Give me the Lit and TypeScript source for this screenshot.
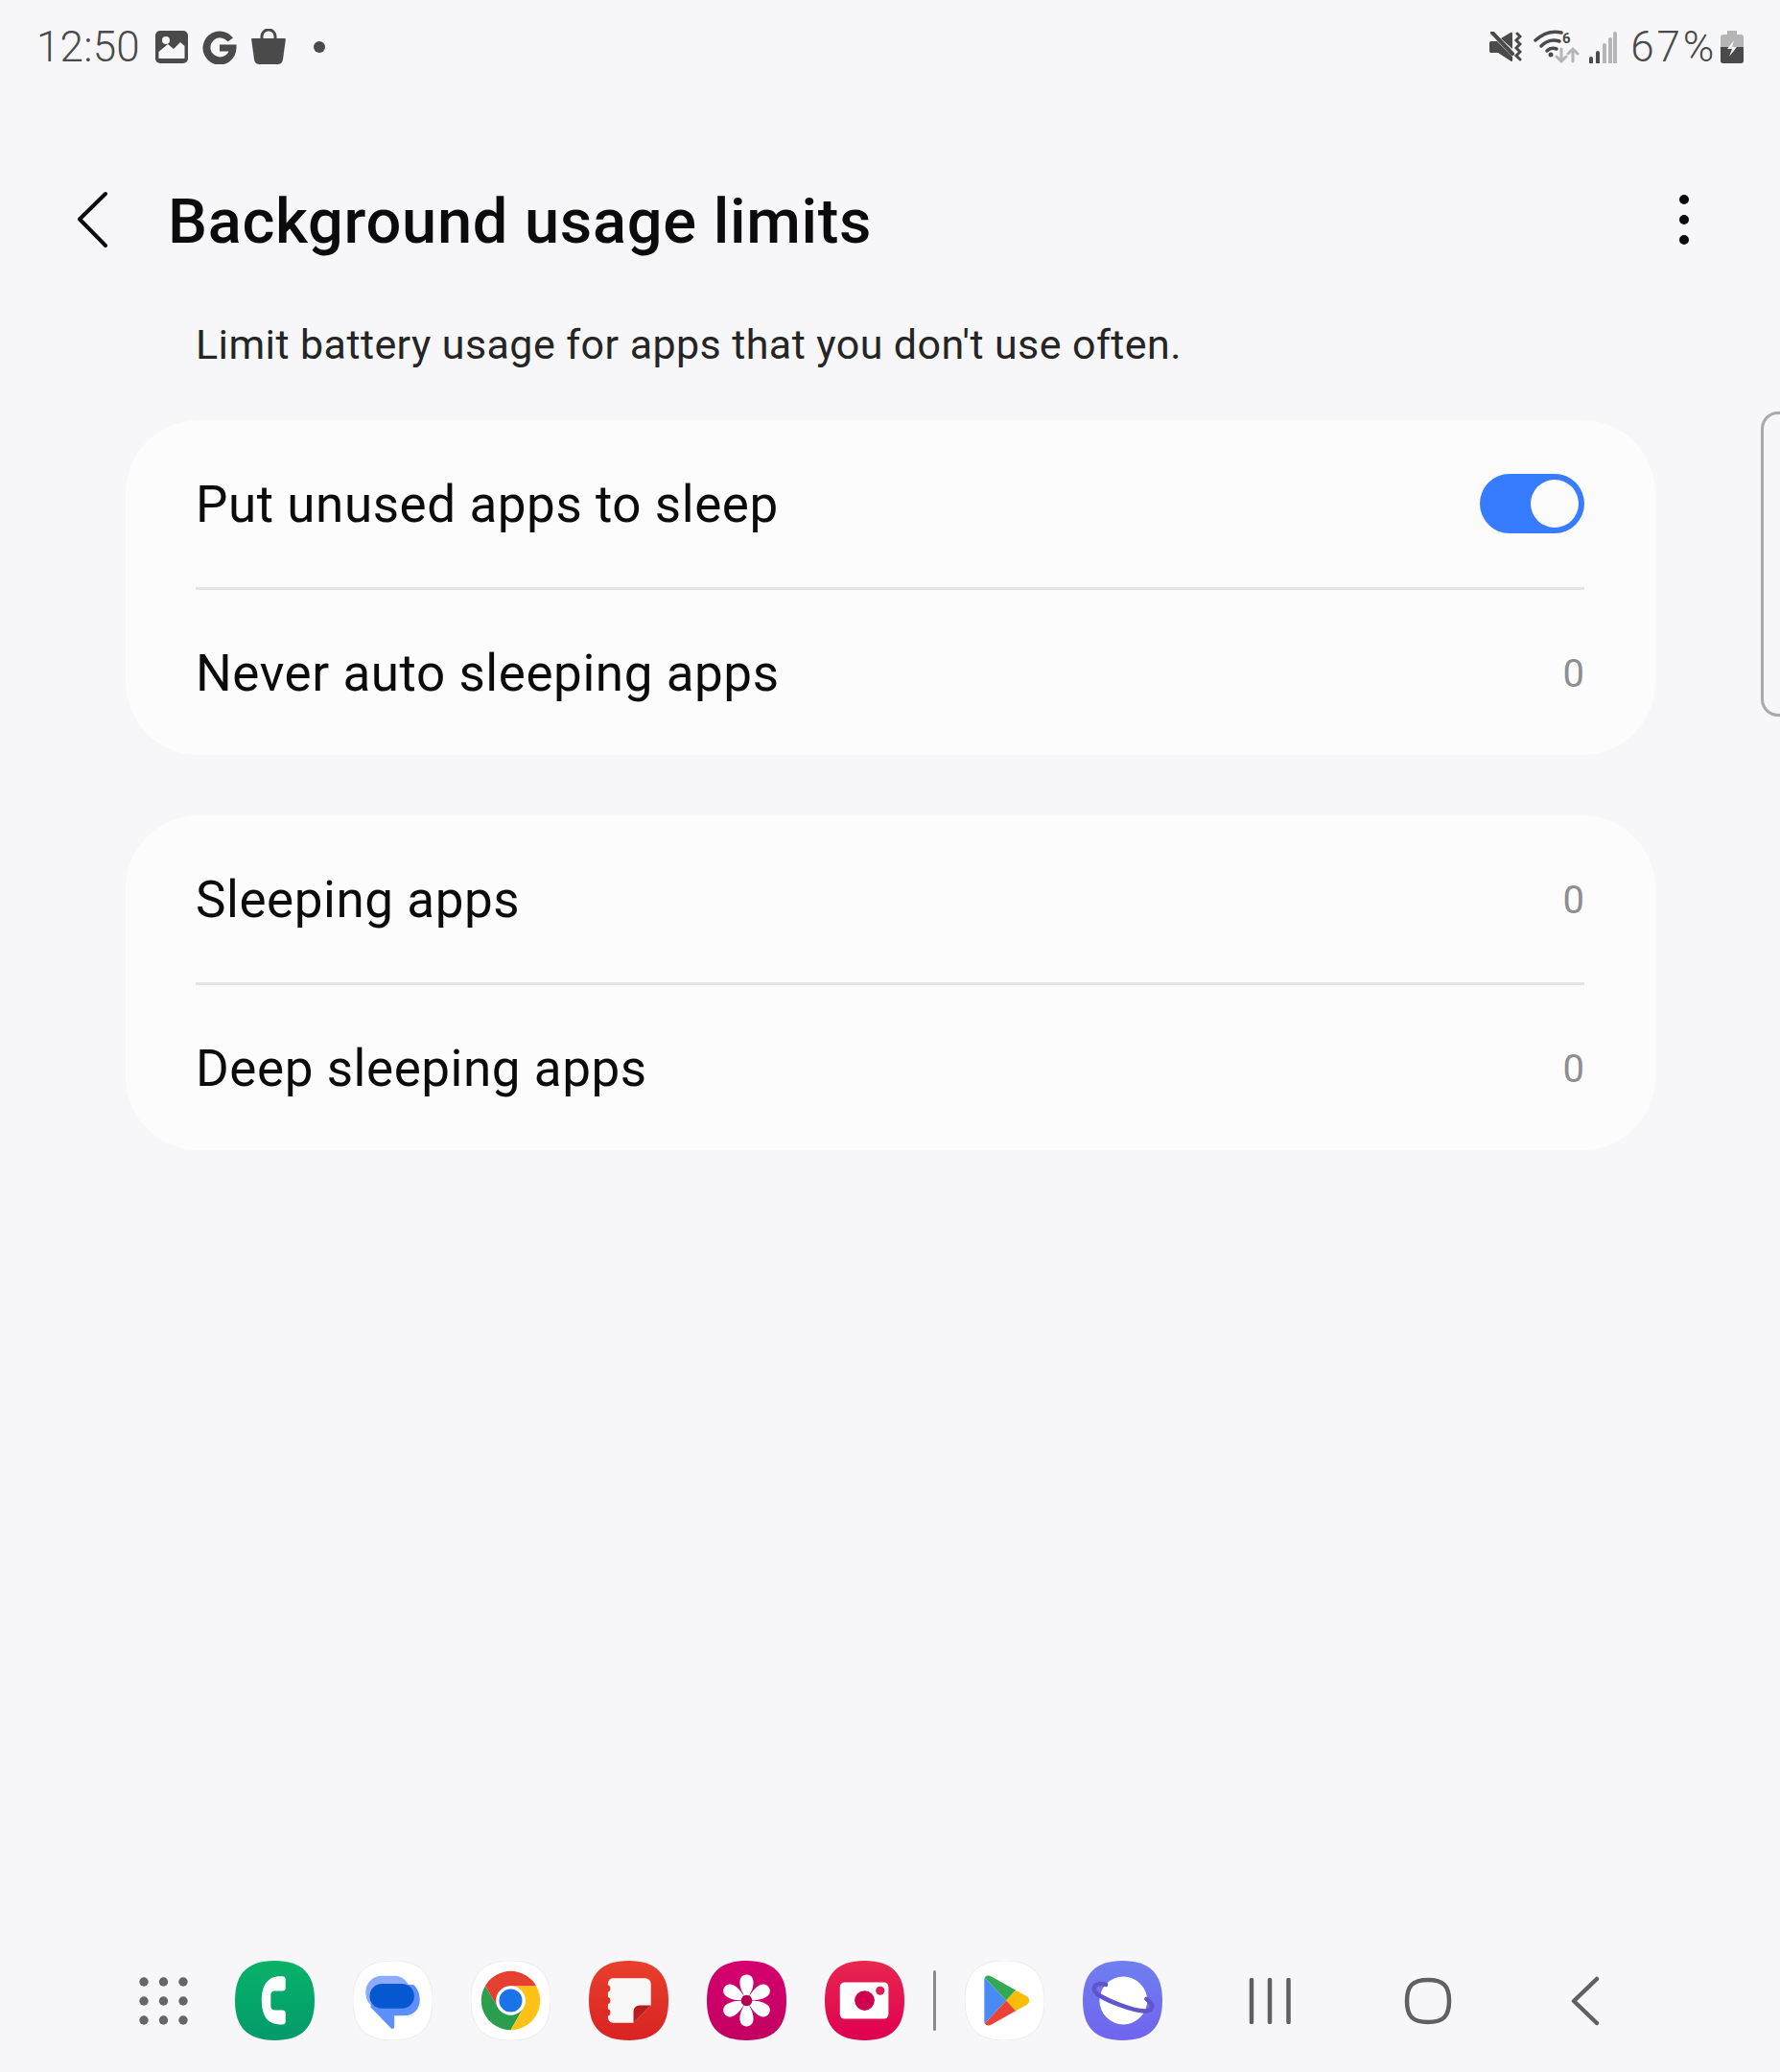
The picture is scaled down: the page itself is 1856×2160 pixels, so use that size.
import { LitElement, html, svg, css } from "lit";
import { customElement } from "lit/decorators.js";

const SQUIRCLE = "M50 0C84 0 100 16 100 50C100 84 84 100 50 100C16 100 0 84 0 50C0 16 16 0 50 0Z";

const appIcons = [
  html`<svg class="app" viewBox="0 0 100 100">
    <defs><linearGradient id="gPhone" x1="0" y1="0" x2="0" y2="1"><stop offset="0" stop-color="#09b268"/><stop offset="1" stop-color="#029a6b"/></linearGradient></defs>
    <path d=${SQUIRCLE} fill="url(#gPhone)"/>
    <path fill="#fff" d="M60 19.5C62 19.5 63.5 21 63.5 23V35C63.5 37 62 38 60 38H50C46.5 38 45 40 45 43V57C45 60 46.5 62 50 62H60C62 62 63.5 63.5 63.5 65V77C63.5 79 62 80 60 80H56C42 80 33.5 70 33.5 50C33.5 30 42 19.5 56 19.5Z"/>
  </svg>`,
  html`<svg class="app" viewBox="0 0 100 100">
    <path d=${SQUIRCLE} fill="#fff" stroke="#e8e8ea" stroke-width="1"/>
    <rect x="16" y="19" width="56" height="42" rx="20" fill="#8aabff"/>
    <path fill="#5e8fff" d="M22 58L48 85C50 86 52 85 52 83V69H64C76 69 84 61 84 49C84 40 80 33 76 30L30 30Z"/>
    <rect x="21" y="29" width="56" height="31" rx="15.5" fill="#0558d0"/>
  </svg>`,
  html`<svg class="app" viewBox="0 0 100 100">
    <path d=${SQUIRCLE} fill="#fff" stroke="#e8e8ea" stroke-width="1"/>
    <path fill="#2a9d4e" d="M50 50L66 59L50 87A37 37 0 0 1 18 31.5L34 59Z"/>
    <path fill="#fec115" d="M50 50L50 31.5L82 31.5A37 37 0 0 1 50 87L66 59Z"/>
    <path fill="#e53f30" d="M50 50L34 59L18 31.5A37 37 0 0 1 82 31.5L50 31.5Z"/>
    <circle cx="50" cy="50" r="18.5" fill="#fff"/>
    <circle cx="50" cy="50" r="14.5" fill="#1a73e8"/>
  </svg>`,
  html`<svg class="app" viewBox="0 0 100 100">
    <defs><linearGradient id="gNotes" x1="0" y1="0" x2="0" y2="1"><stop offset="0" stop-color="#e8402c"/><stop offset="1" stop-color="#d92322"/></linearGradient></defs>
    <path d=${SQUIRCLE} fill="url(#gNotes)"/>
    <path fill="#f8f8f8" d="M30 22H70C75 22 78 25 78 30V56L56 78H31C27 78 25 76 24 72V28C25 24 27 22 30 22Z"/>
    <circle cx="22.5" cy="35" r="4.5" fill="#e33527"/>
    <circle cx="22.5" cy="50" r="4.5" fill="#e02f25"/>
    <circle cx="22.5" cy="65" r="4.5" fill="#de2a24"/>
    <path fill="#b51e1f" d="M78 56H64C59 56 56 60 56 64V78Z"/>
  </svg>`,
  html`<svg class="app" viewBox="0 0 100 100">
    <defs><linearGradient id="gGallery" x1="0" y1="0" x2="0" y2="1"><stop offset="0" stop-color="#d5006f"/><stop offset="1" stop-color="#c20061"/></linearGradient></defs>
    <path d=${SQUIRCLE} fill="url(#gGallery)"/>
    ${[0, 60, 120, 180, 240, 300].map(
      (a) => svg`<path fill="#fff" transform="rotate(${a} 50 50)" d="M50 50C46 42 41.5 36 41.5 27C41.5 21 45 17.5 50 17.5C55 17.5 58.5 21 58.5 27C58.5 36 54 42 50 50Z"/>`
    )}
    <circle cx="50" cy="50" r="7" fill="#b5004f"/>
  </svg>`,
  html`<svg class="app" viewBox="0 0 100 100">
    <defs><linearGradient id="gCamera" x1="0" y1="0" x2="0" y2="1"><stop offset="0" stop-color="#e8264f"/><stop offset="1" stop-color="#df0052"/></linearGradient></defs>
    <path d=${SQUIRCLE} fill="url(#gCamera)"/>
    <rect x="19" y="27" width="61" height="46" rx="6" fill="#fff"/>
    <circle cx="50" cy="50" r="12.5" fill="#cf0050"/>
    <circle cx="69.6" cy="37.7" r="5.5" fill="#e01a50"/>
  </svg>`,
];

const appIconsAfter = [
  html`<svg class="app" viewBox="0 0 100 100">
    <path d=${SQUIRCLE} fill="#fff" stroke="#e8e8ea" stroke-width="1"/>
    <path fill="#4a8af4" d="M25 21L52 50L25 79C24.5 78 24.5 77 24.5 76V24C24.5 23 24.5 22 25 21Z"/>
    <path fill="#34a853" d="M25 21C27 18.5 30 18 33 19.5L64 37L52 50Z"/>
    <path fill="#fbbc04" d="M64 37L78 45C82 47.5 82 52.5 78 55L64 63L52 50Z"/>
    <path fill="#ea4335" d="M25 79L52 50L64 63L33 80.5C30 82 27 81.5 25 79Z"/>
  </svg>`,
  html`<svg class="app" viewBox="0 0 100 100">
    <defs><linearGradient id="gNet" x1="0" y1="0" x2="0" y2="1"><stop offset="0" stop-color="#6f7ff0"/><stop offset="1" stop-color="#7064ef"/></linearGradient></defs>
    <path d=${SQUIRCLE} fill="url(#gNet)"/>
    <circle cx="51" cy="50" r="30" fill="#fff"/>
    <path fill="none" stroke="#6055cc" stroke-width="5.5" stroke-linecap="round" d="M29 30C19 27 12 31 15 38C20 47 72 68 84 62C90 58 86 52 80 48"/>
  </svg>`,
];

@customElement("app-root")
export class AppRoot extends LitElement {
  static styles = css`
    :host {
      display: block;
    }
    .screen {
      position: relative;
      display: flex;
      flex-direction: column;
      height: 2160px;
      overflow: hidden;
      background: #f7f7f9;
      font-family: Roboto, "Noto Sans", sans-serif;
      color: #0b0b0b;
    }
    .status {
      display: flex;
      justify-content: space-between;
      align-items: center;
      height: 98px;
      padding: 0 38px 0 38px;
      color: #4a4a4a;
    }
    .status-group {
      display: flex;
      align-items: center;
    }
    .status-text {
      font-size: 44px;
      font-weight: 300;
      line-height: 50px;
      letter-spacing: 0.2px;
    }
    .battery-text {
      margin-left: 14px;
      letter-spacing: 2.8px;
    }
    .status svg {
      display: block;
    }
    .header {
      display: flex;
      align-items: center;
      justify-content: space-between;
      height: 100px;
      margin-top: 81px;
      padding: 0 95px 0 80px;
    }
    .header-left {
      display: flex;
      align-items: center;
      gap: 62px;
    }
    .title {
      margin: 3px 0 0;
      font-size: 65px;
      font-weight: 500;
      letter-spacing: 0.7px;
    }
    .desc {
      margin: 50px 0 49px 204px;
      font-size: 43px;
      line-height: 60px;
      letter-spacing: 0.42px;
      color: #252525;
    }
    .card {
      width: 1595px;
      margin: 0 0 63px 131px;
      padding: 0 74px 0 73px;
      box-sizing: border-box;
      border-radius: 76px;
      background: #fcfcfd;
    }
    .row {
      display: flex;
      align-items: center;
      justify-content: space-between;
      box-sizing: border-box;
      height: 174px;
      padding-top: 2px;
      font-size: 53px;
      letter-spacing: 0.55px;
    }
    .row + .row {
      height: 175px;
      border-top: 3px solid #e4e4e6;
    }
    .count {
      font-size: 40px;
      letter-spacing: 0;
      color: #8e8e90;
    }
    .toggle {
      position: relative;
      width: 109px;
      height: 62px;
      margin-top: -2px;
      border-radius: 31px;
      background: #377cff;
    }
    .knob {
      position: absolute;
      top: 6px;
      right: 6px;
      width: 50px;
      height: 50px;
      border-radius: 50%;
      background: #fcfcfd;
    }
    .handle {
      position: absolute;
      top: 429px;
      right: -21px;
      width: 35px;
      height: 312px;
      border: 3px solid #a9a9a9;
      border-radius: 18px;
    }
    .dock {
      display: flex;
      align-items: center;
      margin-top: auto;
      height: 83px;
      margin-bottom: 33px;
      padding-left: 145px;
    }
    .apps {
      display: flex;
      align-items: center;
      gap: 40px;
      margin-left: 48px;
    }
    .app {
      display: block;
      width: 83px;
      height: 83px;
    }
    .sep {
      width: 3px;
      height: 63px;
      margin: 0 -10px 0 -10px;
      border-radius: 2px;
      background: #8a8a8a;
    }
    .nav {
      display: flex;
      align-items: center;
      margin-left: 90px;
      gap: 118px;
    }
    .nav-back {
      margin-left: 6px;
    }
  `;

  render() {
    return html`
      <div class="screen">
        <div class="status">
          <div class="status-group">
            <span class="status-text">12:50</span>
            <svg width="36" height="36" viewBox="0 0 36 36" style="margin-left:15px">
              <rect x="1" y="1" width="34" height="34" rx="5" fill="#4a4a4a"/>
              <path d="M4.5 30V23L14 15L20 20L27 13L31.5 17V30Z" fill="#f7f7f9"/>
              <circle cx="12" cy="11" r="4" fill="#f7f7f9"/>
            </svg>
            <svg width="36" height="36" viewBox="0 0 36 36" style="margin-left:14px">
              <path d="M32 8.500A17.500 17.500 0 1 0 35.500 19V15.500H18V22.500H27.500A10 10 0 1 1 26.500 12.500Z" fill="#4a4a4a"/>
            </svg>
            <svg width="36" height="38" viewBox="0 0 36 38" style="margin-left:15px">
              <path d="M11 11V8A7 7 0 0 1 25 8V11" fill="none" stroke="#4a4a4a" stroke-width="3"/>
              <path d="M1 10H35C35.500 10 36 10.500 35.800 11.500L33 32C32.600 35 30.500 37 27.500 37H8.500C5.500 37 3.400 35 3 32L.2 11.500C0 10.500.5 10 1 10Z" fill="#4a4a4a"/>
            </svg>
            <svg width="12" height="12" viewBox="0 0 12 12" style="margin-left:29px">
              <circle cx="6" cy="6" r="6" fill="#4a4a4a"/>
            </svg>
          </div>
          <div class="status-group">
            <svg width="34" height="32" viewBox="0 0 34 32">
              <path d="M0 12C0 10.500 1 10 2 10H8L10 12L24 26V30C24 31 23 31.500 22 30.500L9 22H2C1 22 0 21.500 0 20Z" fill="#4a4a4a"/>
              <path d="M12 7L22 1C23 .5 24 1 24 2V18Z" fill="#4a4a4a"/>
              <path d="M3 1L24 23" stroke="#4a4a4a" stroke-width="4" stroke-linecap="round"/>
              <path d="M29 2L32 5L28 9L32 13L28 17L32 21L28 25L32 29" fill="none" stroke="#4a4a4a" stroke-width="3" stroke-linecap="round"/>
            </svg>
            <svg width="48" height="36" viewBox="0 0 48 36" style="margin-left:12px">
              <path d="M2 11C11 3 21 1 29 3" fill="none" stroke="#4a4a4a" stroke-width="3.500" stroke-linecap="round"/>
              <path d="M8 17C14 11 21 10 27 12" fill="none" stroke="#4a4a4a" stroke-width="3.500" stroke-linecap="round"/>
              <path d="M14 22C17 19 21 19 24 20" fill="none" stroke="#4a4a4a" stroke-width="3.500" stroke-linecap="round"/>
              <circle cx="18" cy="26" r="2.500" fill="#4a4a4a"/>
              <text x="30" y="14" font-size="15" font-weight="700" font-family="Roboto, sans-serif" fill="#4a4a4a">6</text>
              <path d="M29 20V33M24 28L29 33L34 28" fill="none" stroke="#b5b5b5" stroke-width="3" stroke-linecap="round"/>
              <path d="M41 33V20M36 25L41 20L46 25" fill="none" stroke="#b5b5b5" stroke-width="3" stroke-linecap="round"/>
            </svg>
            <svg width="30" height="33" viewBox="0 0 30 33" style="margin-left:9px">
              <path d="M3 32V28" stroke="#4a4a4a" stroke-width="4" stroke-linecap="round"/>
              <path d="M10 32V22" stroke="#4a4a4a" stroke-width="4" stroke-linecap="round"/>
              <path d="M17 32V14" stroke="#b5b5b5" stroke-width="4" stroke-linecap="round"/>
              <path d="M23 32V8" stroke="#b5b5b5" stroke-width="4" stroke-linecap="round"/>
              <path d="M28 32V2" stroke="#b5b5b5" stroke-width="4" stroke-linecap="round"/>
            </svg>
            <span class="status-text battery-text">67%</span>
            <svg width="24" height="34" viewBox="0 0 24 34" style="margin-left:4px">
              <path d="M7 0H17V4H21C23 4 24 5 24 7V31C24 33 23 34 21 34H3C1 34 0 33 0 31V7C0 5 1 4 3 4H7Z" fill="#b5b5b5"/>
              <path d="M0 17H24V31C24 33 23 34 21 34H3C1 34 0 33 0 31Z" fill="#4a4a4a"/>
              <path d="M14 10L7 19H12L9 27L17 17H12Z" fill="#f7f7f9"/>
            </svg>
          </div>
        </div>

        <div class="header">
          <div class="header-left">
            <svg width="33" height="60" viewBox="0 0 33 60">
              <path d="M30 3L3 29.500L30 57" fill="none" stroke="#0b0b0b" stroke-width="4" stroke-linecap="round" stroke-linejoin="round"/>
            </svg>
            <h1 class="title">Background usage limits</h1>
          </div>
          <svg width="10" height="52" viewBox="0 0 10 52">
            <circle cx="5" cy="5" r="5" fill="#0b0b0b"/>
            <circle cx="5" cy="26" r="5" fill="#0b0b0b"/>
            <circle cx="5" cy="47" r="5" fill="#0b0b0b"/>
          </svg>
        </div>

        <div class="desc">Limit battery usage for apps that you don't use often.</div>

        <div class="card">
          <div class="row"><span>Put unused apps to sleep</span><div class="toggle"><div class="knob"></div></div></div>
          <div class="row"><span>Never auto sleeping apps</span><span class="count">0</span></div>
        </div>
        <div class="card">
          <div class="row"><span>Sleeping apps</span><span class="count">0</span></div>
          <div class="row"><span>Deep sleeping apps</span><span class="count">0</span></div>
        </div>

        <div class="handle"></div>

        <div class="dock">
          <svg width="52" height="50" viewBox="0 0 52 50">
            ${[0, 1, 2].map((r) =>
              [0, 1, 2].map(
                (c) => svg`<circle cx=${5 + c * 20.5} cy=${5 + r * 20} r="4.7" fill="#666"/>`
              )
            )}
          </svg>
          <div class="apps">
            ${appIcons}
            <div class="sep"></div>
            ${appIconsAfter}
          </div>
          <div class="nav">
            <svg width="44" height="48" viewBox="0 0 44 48">
              <path d="M3 2V46M22 2V46M41.500 2V46" stroke="#606060" stroke-width="4.500" stroke-linecap="round"/>
            </svg>
            <svg width="50" height="50" viewBox="0 0 50 50">
              <path d="M25 3C41 3 47 9 47 25C47 41 41 47 25 47C9 47 3 41 3 25C3 9 9 3 25 3Z" fill="none" stroke="#606060" stroke-width="4.500"/>
            </svg>
            <svg class="nav-back" width="32" height="52" viewBox="0 0 32 52">
              <path d="M27 3L3 26L27 49" fill="none" stroke="#606060" stroke-width="4.500" stroke-linecap="round" stroke-linejoin="round"/>
            </svg>
          </div>
        </div>
      </div>
    `;
  }
}
